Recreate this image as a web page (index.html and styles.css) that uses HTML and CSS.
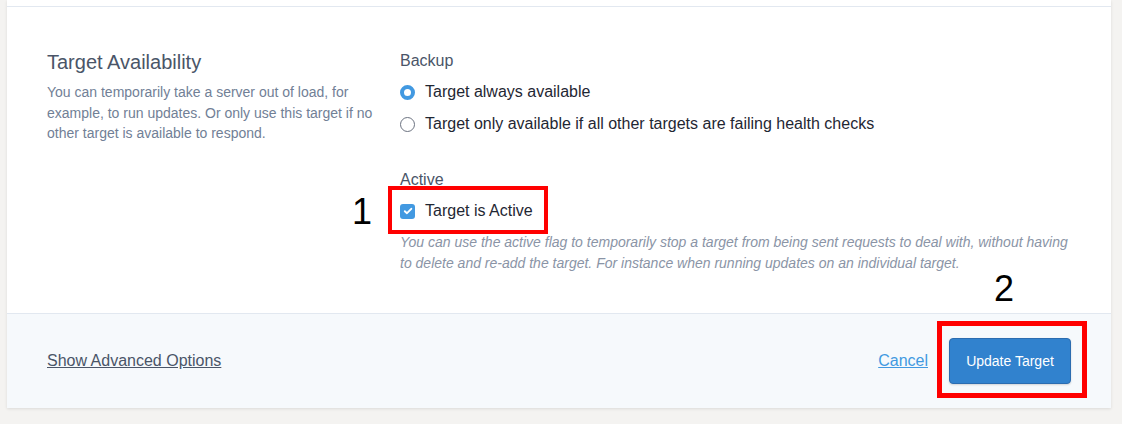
FILE: index.html
```html
<!DOCTYPE html>
<html>
<head>
<meta charset="utf-8">
<link rel="stylesheet" href="styles.css">
</head>
<body>
<div class="page">
  <div class="card">
    <div class="top-strip"></div>
    <section class="section">
      <div class="intro">
        <h2 class="title">Target Availability</h2>
        <p class="desc">You can temporarily take a server out of load, for example, to run updates. Or only use this target if no other target is available to respond.</p>
      </div>
      <div class="fields">
        <div class="group">
          <div class="label">Backup</div>
          <div class="option">
            <span class="radio radio-on"></span>
            <span class="opt-text">Target always available</span>
          </div>
          <div class="option">
            <span class="radio"></span>
            <span class="opt-text">Target only available if all other targets are failing health checks</span>
          </div>
        </div>
        <div class="group group-active">
          <div class="label">Active</div>
          <div class="option">
            <span class="checkbox">
              <svg width="10" height="10" viewBox="0 0 10 10"><path d="M1.8 5.2 L4 7.2 L8.3 2.8" fill="none" stroke="#fff" stroke-width="1.9" stroke-linecap="round" stroke-linejoin="round"/></svg>
            </span>
            <span class="opt-text">Target is Active</span>
          </div>
          <p class="help">You can use the active flag to temporarily stop a target from being sent requests to deal with, without having to delete and re-add the target. For instance when running updates on an individual target.</p>
        </div>
      </div>
    </section>
    <footer class="footer">
      <a class="advanced">Show Advanced Options</a>
      <div class="actions">
        <a class="cancel">Cancel</a>
        <button class="btn">Update Target</button>
      </div>
    </footer>
    <div class="mark mark-1"></div>
    <div class="mark mark-2"></div>
    <div class="num num-1">1</div>
    <div class="num num-2">2</div>
  </div>
</div>
</body>
</html>
```
FILE: styles.css
```css
html, body {
  margin: 0;
  padding: 0;
  background: #f4f3f1;
  font-family: "Liberation Sans", Arial, sans-serif;
}
.page {
  padding-left: 7px;
  height: 424px;
  overflow: hidden;
}
.card {
  position: relative;
  width: 1104px;
  background: #fff;
  box-shadow: 0 1px 3px rgba(0,0,0,0.10);
}
.top-strip {
  height: 6px;
  border-bottom: 1px solid #e2e8f0;
}
.section {
  display: grid;
  grid-template-columns: 330px 1fr;
  column-gap: 23px;
  padding: 42px 40px 39px 40px;
}
.title {
  margin: 1px 0 0 0;
  font-size: 20px;
  line-height: 24px;
  font-weight: normal;
  color: #4a5568;
}
.desc {
  margin: 8px 0 0 0;
  font-size: 14px;
  line-height: 20.5px;
  color: #718096;
}
.fields {
  display: flex;
  flex-direction: column;
}
.group {
  display: flex;
  flex-direction: column;
  gap: 8px;
}
.group-active {
  margin-top: 32px;
}
.label {
  font-size: 16px;
  line-height: 24px;
  color: #4a5568;
  margin-bottom: -1px;
}
.option {
  display: flex;
  align-items: center;
  gap: 10px;
  font-size: 16px;
  line-height: 24px;
  color: #1f2733;
}
.radio {
  box-sizing: border-box;
  width: 15px;
  height: 15px;
  border-radius: 50%;
  border: 1px solid #6b7280;
  background: #fff;
  flex: none;
}
.radio-on {
  border: 4.5px solid #4299e1;
  background: #fff;
}
.checkbox {
  box-sizing: border-box;
  width: 15px;
  height: 15px;
  border-radius: 3px;
  background: #4299e1;
  display: flex;
  align-items: center;
  justify-content: center;
  flex: none;
}
.checkbox svg { display: block; }
.help {
  margin: 1px 0 0 0;
  font-size: 14px;
  line-height: 21px;
  font-style: italic;
  color: #8a94a6;
}
.footer {
  display: flex;
  align-items: center;
  justify-content: space-between;
  height: 94px;
  padding: 0 40px;
  background: #f6f9fc;
  border-top: 1px solid #e2e8f0;
}
.advanced {
  font-size: 16px;
  color: #4a5568;
  text-decoration: underline;
}
.actions {
  display: flex;
  align-items: center;
  gap: 21px;
}
.cancel {
  font-size: 16px;
  color: #4299e1;
  text-decoration: underline;
}
.btn {
  font-family: "Liberation Sans", Arial, sans-serif;
  font-size: 14px;
  line-height: 18px;
  color: #fff;
  background: #3182ce;
  border: 1px solid #2b6cb0;
  border-radius: 4px;
  padding: 13px 16px;
  width: 122px;
  box-shadow: 0 1px 2px rgba(0,0,0,0.15);
}
.mark {
  position: absolute;
  border: 4px solid #ff0000;
  box-sizing: border-box;
}
.mark-1 {
  left: 381px;
  top: 186px;
  width: 160px;
  height: 48px;
}
.mark-2 {
  left: 930px;
  top: 321px;
  width: 150px;
  height: 77px;
  border-width: 5px;
}
.num {
  position: absolute;
  font-family: "Liberation Sans", Arial, sans-serif;
  font-size: 36px;
  line-height: 40px;
  color: #000;
}
.num-1 {
  left: 345px;
  top: 192px;
}
.num-2 {
  left: 987px;
  top: 269px;
}
```
